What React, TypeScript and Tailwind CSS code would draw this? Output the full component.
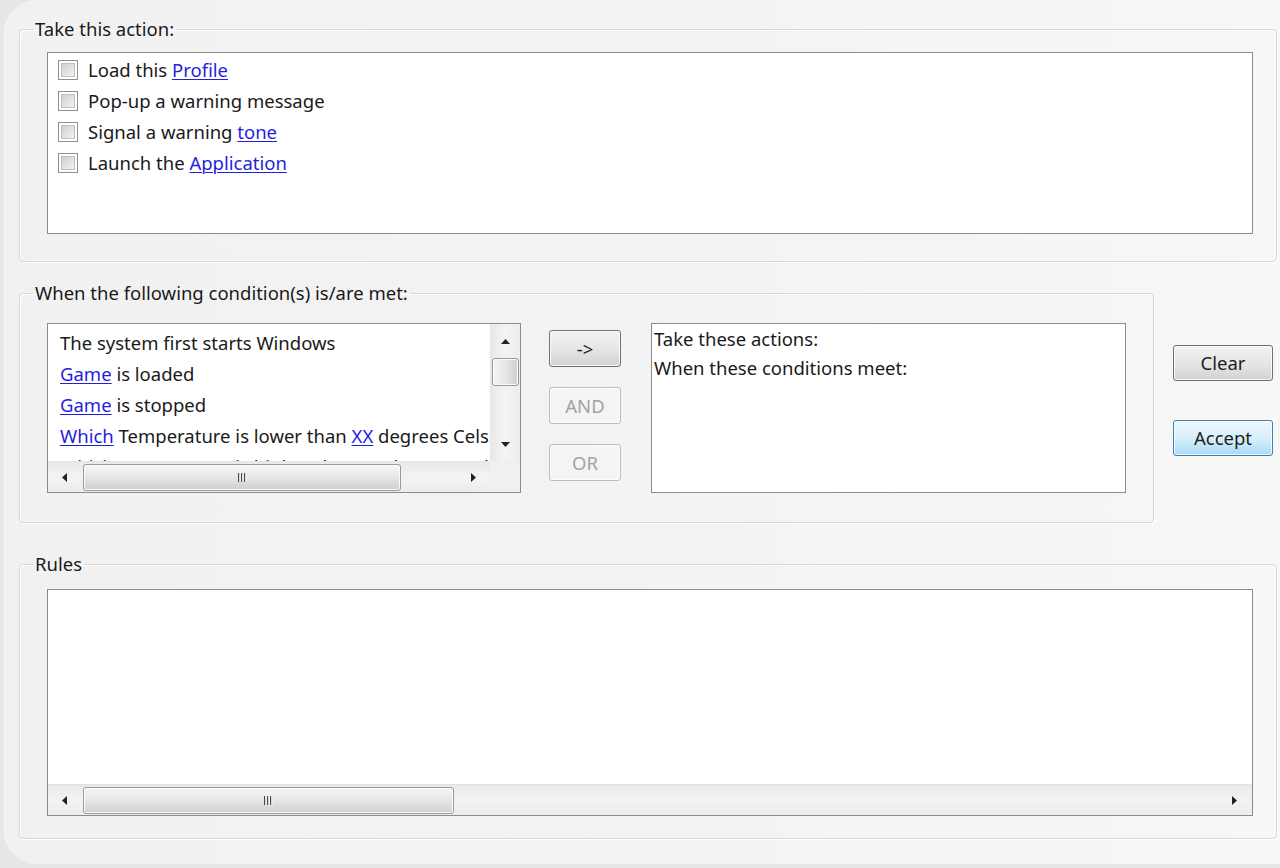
import React from "react"

type Dir = "up" | "down" | "left" | "right"

// tiny filled triangles used by the scrollbar buttons
function Arrow({ dir }: { dir: Dir }) {
  const vertical = dir === "up" || dir === "down"
  const points = {
    up: "0,5 4.5,0 9,5",
    down: "0,0 4.5,5 9,0",
    left: "5,0 0,4.5 5,9",
    right: "0,0 5,4.5 0,9",
  }[dir]
  return (
    <svg width={vertical ? 9 : 5} height={vertical ? 5 : 9} viewBox={vertical ? "0 0 9 5" : "0 0 5 9"}>
      <polygon points={points} fill="#222" />
    </svg>
  )
}

function Grip() {
  return (
    <svg width="9" height="9" viewBox="0 0 9 9">
      {[0, 3, 6].map((x) => (
        <g key={x}>
          <rect x={x} y="0" width="1.4" height="9" fill="#4a4a4a" />
          <rect x={x + 1.4} y="0" width="1" height="9" fill="#fafafa" />
        </g>
      ))}
    </svg>
  )
}

function HScrollbar({ thumbWidth, rightButton = 34 }: { thumbWidth: number; rightButton?: number }) {
  return (
    <div className="flex h-[31px] shrink-0 items-stretch border-t border-[#e2e2e2] bg-gradient-to-b from-[#e9e9e9] via-[#f3f3f3] to-[#ececec]">
      <div className="flex w-[33px] items-center justify-center">
        <Arrow dir="left" />
      </div>
      <div className="flex flex-1 items-center">
        <div
          className="ml-[2px] flex h-[27px] items-center justify-center rounded-[3px] border border-[#9a9a9a] bg-gradient-to-b from-[#f6f6f6] via-[#e6e6e6] to-[#cfcfcf] shadow-[inset_0_0_0_1px_#fbfbfb]"
          style={{ width: thumbWidth }}
        >
          <Grip />
        </div>
      </div>
      <div className="flex items-center justify-center" style={{ width: rightButton }}>
        <Arrow dir="right" />
      </div>
    </div>
  )
}

function VScrollbar() {
  return (
    <div className="flex w-[30px] shrink-0 flex-col items-center border-l border-[#e6e6e6] bg-gradient-to-r from-[#e9e9e9] via-[#f4f4f4] to-[#ececec]">
      <div className="flex h-[34px] w-full items-center justify-center">
        <Arrow dir="up" />
      </div>
      <div className="h-[28px] w-[27px] rounded-[3px] border border-[#9a9a9a] bg-gradient-to-r from-[#f6f6f6] via-[#e6e6e6] to-[#cfcfcf] shadow-[inset_0_0_0_1px_#fbfbfb]" />
      <div className="flex-1" />
      <div className="flex h-[30px] w-full items-center justify-center pb-[4px]">
        <Arrow dir="down" />
      </div>
    </div>
  )
}

function Link({ children }: { children: React.ReactNode }) {
  return <span className="text-[#1f1fdc] underline decoration-1 underline-offset-[2px]">{children}</span>
}

function Checkbox() {
  return (
    <div className="h-[20px] w-[20px] shrink-0 border border-[#8f8f8f] bg-white p-[2px]">
      <div className="h-full w-full border border-[#c0c0c0] bg-gradient-to-br from-[#cfcfcf] to-[#f3f3f3]" />
    </div>
  )
}

function Group({ label, className, children }: { label: string; className: string; children: React.ReactNode }) {
  return (
    <fieldset
      className={`rounded-[4px] border border-[#d7d7d7] pl-[27px] pr-[23px] shadow-[1px_1px_0_#ffffff,inset_1px_1px_0_#ffffff] ${className}`}
    >
      <legend className="-ml-[14px] px-[2px] leading-[22px]">{label}</legend>
      {children}
    </fieldset>
  )
}

function Button({ label, variant = "normal", className = "" }: { label: string; variant?: "normal" | "disabled" | "default"; className?: string }) {
  const look = {
    normal: "border-[#707070] bg-gradient-to-b from-[#f2f2f2] via-[#e6e6e6] to-[#d2d2d2] text-[#1e1e1e]",
    disabled: "border-[#b8bcbf] bg-[#f4f4f4] text-[#a3a3a3]",
    default:
      "border-[#3c7fb1] bg-gradient-to-b from-[#eaf6fd] via-[#d9f0fc] to-[#a7d9f5] text-[#1e1e1e] shadow-[0_0_2px_#6cc5f0]",
  }[variant]
  return (
    <div className={`flex items-center justify-center rounded-[3px] border shadow-[inset_0_0_0_1px_rgba(255,255,255,0.8)] ${look} ${className}`}>
      {label}
    </div>
  )
}

const conditions: React.ReactNode[] = [
  <>The system first starts Windows</>,
  <>
    <Link>Game</Link> is loaded
  </>,
  <>
    <Link>Game</Link> is stopped
  </>,
  <>
    <Link>Which</Link> Temperature is lower than <Link>XX</Link> degrees Celsius
  </>,
  <>
    <Link>Which</Link> Temperature is higher than <Link>XX</Link> degrees Celsius
  </>,
]

const actions: React.ReactNode[] = [
  <>
    Load this <Link>Profile</Link>
  </>,
  <>Pop-up a warning message</>,
  <>
    Signal a warning <Link>tone</Link>
  </>,
  <>
    Launch the <Link>Application</Link>
  </>,
]

export default function App() {
  return (
    <div className="h-[868px] w-[1280px] overflow-hidden bg-[#e7e7e7] font-['Noto_Sans',sans-serif] text-[18.5px] text-[#1a1a1a]">
      <div className="ml-[4px] h-[864px] rounded-l-[34px] border-l border-[#fafafa] bg-gradient-to-r from-[#f1f1f1] via-[#f3f3f3] to-[#f7f7f7] pl-[14px] pt-[18px]">
        {/* action checkboxes */}
        <Group label="Take this action:" className="w-[1258px] pb-[27px]">
          <div className="mt-[12px] h-[182px] border border-[#8c8c8c] bg-white pl-[10px] pt-[1px]">
            {actions.map((item, i) => (
              <div key={i} className="flex h-[31px] items-center gap-[10px]">
                <Checkbox />
                <span>{item}</span>
              </div>
            ))}
          </div>
        </Group>

        {/* condition picker */}
        <div className="mt-[20px] flex items-start gap-[19px]">
          <Group label="When the following condition(s) is/are met:" className="w-[1135px] pb-[29px]">
            <div className="mt-[19px] flex items-start">
              <div className="flex h-[170px] w-[474px] flex-col border border-[#8c8c8c] bg-white">
                <div className="flex min-h-0 flex-1">
                  <div className="flex-1 overflow-hidden whitespace-nowrap pl-[12px] pt-[3px]">
                    {conditions.map((c, i) => (
                      <div key={i} className="h-[31px] leading-[31px]">
                        {c}
                      </div>
                    ))}
                  </div>
                  <VScrollbar />
                </div>
                <div className="flex">
                  <div className="flex-1">
                    <HScrollbar thumbWidth={318} />
                  </div>
                  <div className="w-[30px] bg-[#f0f0f0]" />
                </div>
              </div>

              <div className="ml-[28px] mt-[7px] flex w-[72px] flex-col gap-[20px]">
                <Button label="->" className="h-[37px]" />
                <Button label="AND" variant="disabled" className="h-[37px]" />
                <Button label="OR" variant="disabled" className="h-[37px]" />
              </div>

              <div className="ml-[30px] h-[170px] w-[475px] border border-[#8c8c8c] bg-white pl-[2px]">
                <div className="h-[29px] leading-[29px]">Take these actions:</div>
                <div className="h-[29px] leading-[29px]">When these conditions meet:</div>
              </div>
            </div>
          </Group>

          <div className="mt-[63px] flex w-[100px] flex-col gap-[39px]">
            <Button label="Clear" className="h-[36px]" />
            <Button label="Accept" variant="default" className="h-[36px]" />
          </div>
        </div>

        {/* saved rules */}
        <Group label="Rules" className="mt-[30px] w-[1258px] pb-[22px]">
          <div className="mt-[14px] flex h-[227px] flex-col border border-[#8c8c8c] bg-white">
            <div className="flex-1" />
            <HScrollbar thumbWidth={371} rightButton={36} />
          </div>
        </Group>
      </div>
    </div>
  )
}
